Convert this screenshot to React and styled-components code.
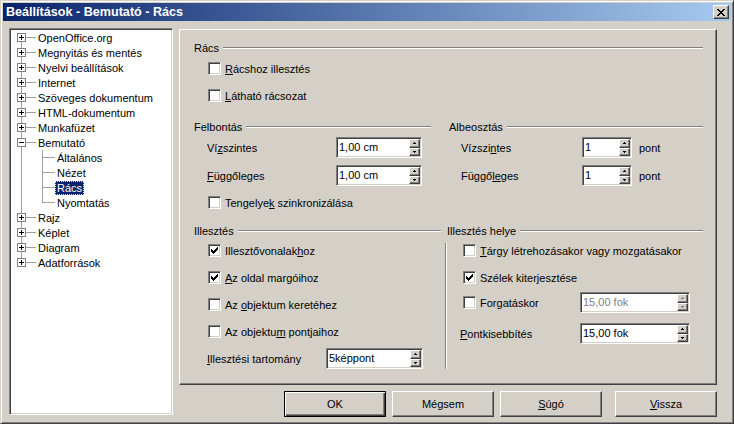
import React from 'react';
import styled, { createGlobalStyle, css } from 'styled-components';

const FACE = '#d4d0c8';
const LINE = '#a0a0a0';

const Global = createGlobalStyle`
  html, body { margin: 0; padding: 0; background: ${FACE}; }
  body { font-family: "Liberation Sans", Arial, sans-serif; font-size: 11px; color: #000; }
  * { box-sizing: border-box; }
`;

const sunken = css`
  border: 1px solid;
  border-color: #808080 #fff #fff #808080;
  box-shadow: inset 1px 1px #404040, inset -1px -1px ${FACE};
`;

const raised = css`
  border: 1px solid;
  border-color: #fff #404040 #404040 #fff;
  box-shadow: inset -1px -1px #808080;
`;

const Window = styled.div`
  width: 734px;
  height: 424px;
  background: ${FACE};
  border: 1px solid;
  border-color: ${FACE} #404040 #404040 ${FACE};
  box-shadow: inset 1px 1px #fff, inset -1px -1px #808080;
  padding: 2px;
  display: flex;
  flex-direction: column;
`;

const TitleBar = styled.div`
  height: 18px;
  flex: none;
  display: flex;
  align-items: center;
  justify-content: space-between;
  padding: 0 2px 0 3px;
  background: linear-gradient(to right, #0a246a, #a6caf0);
`;

const Title = styled.span`
  color: #fff;
  font-weight: bold;
  font-size: 12.6px;
  line-height: 18px;
  white-space: nowrap;
`;

const CloseButton = styled.div`
  width: 16px;
  height: 14px;
  background: ${FACE};
  ${raised};
  display: flex;
  align-items: center;
  justify-content: center;
`;

const Glyph = styled.svg`
  display: block;
  flex: none;
`;

const Body = styled.div`
  flex: 1;
  display: flex;
  gap: 6px;
  padding: 7px 14px 0 6px;
`;

const Tree = styled.div`
  width: 164px;
  height: 387px;
  flex: none;
  background: #fff;
  ${sunken};
  padding: 1px 1px 0 1px;
  display: flex;
  flex-direction: column;
`;

const TreeRow = styled.div`
  height: 15px;
  display: flex;
  align-items: center;
`;

const TreeLabel = styled.span`
  height: 14px;
  line-height: 14px;
  padding: 0 2px;
  white-space: nowrap;
  ${p => p.$selected && css`
    background: #0a246a;
    color: #fff;
    outline: 1px dotted #e8dca0;
    outline-offset: -1px;
  `}
`;

const RightCol = styled.div`
  width: 538px;
  flex: none;
  display: flex;
  flex-direction: column;
  gap: 6px;
  padding-top: 1px;
`;

const Panel = styled.div`
  height: 356px;
  ${raised};
  padding: 11px 13px 0 14px;
  display: flex;
  flex-direction: column;
`;

const GroupHead = styled.div`
  height: 14px;
  display: flex;
  align-items: center;
  gap: 4px;
  padding-left: ${p => p.$pl || 0}px;
`;

const HeadText = styled.span`
  line-height: 14px;
  white-space: nowrap;
`;

const HeadLine = styled.div`
  flex: 1;
  height: 2px;
  border-top: 1px solid #808080;
  border-bottom: 1px solid #fff;
`;

const TwoCol = styled.div`
  display: flex;
  gap: ${p => p.$gap}px;
  margin-top: ${p => p.$mt}px;
`;

const Col = styled.div`
  width: ${p => p.$w}px;
  flex: none;
  display: flex;
  flex-direction: column;
`;

const CheckRow = styled.div`
  height: 13px;
  display: flex;
  align-items: center;
  gap: 4px;
  margin-top: ${p => p.$mt || 0}px;
  margin-left: ${p => p.$ml || 0}px;
  white-space: nowrap;
`;

const Box = styled.div`
  width: 13px;
  height: 13px;
  flex: none;
  background: #fff;
  ${sunken};
  display: flex;
  align-items: center;
  justify-content: center;
`;

const FieldRow = styled.div`
  height: 21px;
  display: flex;
  align-items: center;
  margin-top: ${p => p.$mt || 0}px;
  margin-left: ${p => p.$ml || 0}px;
  white-space: nowrap;
`;

const FieldLabel = styled.span`
  width: ${p => p.$w}px;
  flex: none;
  margin-left: ${p => p.$ml || 0}px;
`;

const Spin = styled.div`
  width: ${p => p.$w}px;
  height: 21px;
  flex: none;
  background: #fff;
  ${sunken};
  padding: 1px;
  display: flex;
`;

const SpinText = styled.span`
  flex: 1;
  line-height: 17px;
  padding-left: 1px;
  color: ${p => (p.$disabled ? '#808080' : '#000')};
`;

const SpinButtons = styled.div`
  width: 11px;
  flex: none;
  display: flex;
  flex-direction: column;
`;

const SpinButton = styled.div`
  flex: 1;
  background: ${FACE};
  ${raised};
  display: flex;
  align-items: center;
  justify-content: center;
`;

const Unit = styled.span`
  margin-left: 7px;
`;

const SideBody = styled.div`
  margin-top: 5px;
  height: 126px;
  border-left: 1px solid #808080;
  box-shadow: inset 1px 0 #fff;
  padding: 1px 0 0 14px;
  display: flex;
  flex-direction: column;
`;

const ButtonRow = styled.div`
  height: 26px;
  display: flex;
  justify-content: flex-end;
  gap: 6px;
`;

const Button = styled.button`
  width: 102px;
  height: 26px;
  margin: 0;
  padding: 0;
  font: 11px "Liberation Sans", Arial, sans-serif;
  color: #000;
  background: ${FACE};
  ${raised};
  margin-left: ${p => p.$ml || 0}px;
  ${p => p.$default && css`
    border-color: #000;
    box-shadow: inset 1px 1px #fff, inset -1px -1px #404040, inset -2px -2px #808080;
  `}
`;

const U = styled.span`
  text-decoration: underline;
`;

function Pixels({ rows, w, h, color = '#000' }) {
  return (
    <Glyph width={w} height={h} shapeRendering="crispEdges">
      {rows.map((r, y) => r.map(x => <rect key={`${x}-${y}`} x={x} y={y} width="1" height="1" fill={color} />))}
    </Glyph>
  );
}

const X_ROWS = [[0, 1, 6, 7], [1, 2, 5, 6], [2, 3, 4, 5], [3, 4], [2, 3, 4, 5], [1, 2, 5, 6], [0, 1, 6, 7]];
const CHECK_ROWS = [[6], [5, 6], [0, 4, 5, 6], [0, 1, 3, 4, 5], [0, 1, 2, 3, 4], [1, 2, 3], [2]];
const UP_ROWS = [[1], [0, 1, 2]];
const DOWN_ROWS = [[0, 1, 2], [1]];

function CheckBox({ checked }) {
  return <Box>{checked && <Pixels rows={CHECK_ROWS} w={7} h={7} />}</Box>;
}

function SpinBox({ w, value, disabled }) {
  const c = disabled ? '#808080' : '#000';
  return (
    <Spin $w={w}>
      <SpinText $disabled={disabled}>{value}</SpinText>
      <SpinButtons>
        <SpinButton><Pixels rows={UP_ROWS} w={3} h={2} color={c} /></SpinButton>
        <SpinButton><Pixels rows={DOWN_ROWS} w={3} h={2} color={c} /></SpinButton>
      </SpinButtons>
    </Spin>
  );
}

function Check({ checked, children, mt, ml }) {
  return (
    <CheckRow $mt={mt} $ml={ml}>
      <CheckBox checked={checked} />
      <span>{children}</span>
    </CheckRow>
  );
}

function Heading({ children, pl }) {
  return (
    <GroupHead $pl={pl}>
      <HeadText>{children}</HeadText>
      <HeadLine />
    </GroupHead>
  );
}

function TopConnector({ first, last, kind }) {
  const y0 = first ? 7 : 0;
  const y1 = last ? 8 : 15;
  return (
    <Glyph width="25" height="15" shapeRendering="crispEdges">
      <rect x="10" y={y0} width="1" height={y1 - y0} fill={LINE} />
      <rect x="10" y="7" width="15" height="1" fill={LINE} />
      <rect x="6.5" y="3.5" width="8" height="8" fill="#fff" stroke="#808080" />
      <rect x="8" y="7" width="5" height="1" fill="#000" />
      {kind === 'plus' && <rect x="10" y="5" width="1" height="5" fill="#000" />}
    </Glyph>
  );
}

function ChildConnector({ last }) {
  return (
    <Glyph width="44" height="15" shapeRendering="crispEdges">
      <rect x="10" y="0" width="1" height="15" fill={LINE} />
      <rect x="31" y="0" width="1" height={last ? 8 : 15} fill={LINE} />
      <rect x="31" y="7" width="13" height="1" fill={LINE} />
    </Glyph>
  );
}

const TREE = [
  { label: 'OpenOffice.org' },
  { label: 'Megnyitás és mentés' },
  { label: 'Nyelvi beállítások' },
  { label: 'Internet' },
  { label: 'Szöveges dokumentum' },
  { label: 'HTML-dokumentum' },
  { label: 'Munkafüzet' },
  { label: 'Bemutató', children: ['Általános', 'Nézet', 'Rács', 'Nyomtatás'], selected: 'Rács' },
  { label: 'Rajz' },
  { label: 'Képlet' },
  { label: 'Diagram' },
  { label: 'Adatforrások' },
];

function OptionsTree() {
  const rows = [];
  TREE.forEach((item, i) => {
    rows.push(
      <TreeRow key={item.label}>
        <TopConnector first={i === 0} last={i === TREE.length - 1} kind={item.children ? 'minus' : 'plus'} />
        <TreeLabel>{item.label}</TreeLabel>
      </TreeRow>
    );
    if (item.children) {
      item.children.forEach((c, j) => {
        rows.push(
          <TreeRow key={c}>
            <ChildConnector last={j === item.children.length - 1} />
            <TreeLabel $selected={c === item.selected}>{c}</TreeLabel>
          </TreeRow>
        );
      });
    }
  });
  return <Tree>{rows}</Tree>;
}

export default function App() {
  return (
    <>
      <Global />
      <Window>
        <TitleBar>
          <Title>Beállítások - Bemutató - Rács</Title>
          <CloseButton><Pixels rows={X_ROWS} w={8} h={7} /></CloseButton>
        </TitleBar>
        <Body>
          <OptionsTree />
          <RightCol>
            <Panel>
              <Heading>Rács</Heading>
              <Check mt={7} ml={14}><U>R</U>ácshoz illesztés</Check>
              <Check mt={14} ml={14}><U>L</U>átható rácsozat</Check>

              <TwoCol $mt={18} $gap={18}>
                <Col $w={237}>
                  <Heading>Felbontás</Heading>
                  <FieldRow $mt={3} $ml={13}>
                    <FieldLabel $w={129}>Ví<U>z</U>szintes</FieldLabel>
                    <SpinBox w={86} value="1,00 cm" />
                  </FieldRow>
                  <FieldRow $mt={7} $ml={13}>
                    <FieldLabel $w={129}><U>F</U>üggőleges</FieldLabel>
                    <SpinBox w={86} value="1,00 cm" />
                  </FieldRow>
                  <Check mt={10} ml={14}>Tengelye<U>k</U> szinkronizálása</Check>
                </Col>
                <Col $w={254}>
                  <Heading>Albeosztás</Heading>
                  <FieldRow $mt={3} $ml={12}>
                    <FieldLabel $w={121}>Vízszi<U>n</U>tes</FieldLabel>
                    <SpinBox w={50} value="1" />
                    <Unit>pont</Unit>
                  </FieldRow>
                  <FieldRow $mt={7} $ml={12}>
                    <FieldLabel $w={121}>Függő<U>le</U>ges</FieldLabel>
                    <SpinBox w={50} value="1" />
                    <Unit>pont</Unit>
                  </FieldRow>
                </Col>
              </TwoCol>

              <TwoCol $mt={15} $gap={4}>
                <Col $w={247}>
                  <Heading>Illesztés</Heading>
                  <Check checked mt={6} ml={14}>Illesztővonalak<U>h</U>oz</Check>
                  <Check checked mt={14} ml={14}><U>A</U>z oldal margóihoz</Check>
                  <Check mt={14} ml={14}>Az <U>o</U>bjektum keretéhez</Check>
                  <Check mt={14} ml={14}>Az objektu<U>m</U> pontjaihoz</Check>
                  <FieldRow $mt={10} $ml={13}>
                    <FieldLabel $w={119}><U>I</U>llesztési tartomány</FieldLabel>
                    <SpinBox w={97} value="5képpont" />
                  </FieldRow>
                </Col>
                <Col $w={258}>
                  <Heading pl={2}>Illesztés helye</Heading>
                  <SideBody>
                    <Check ml={3}><U>T</U>árgy létrehozásakor vagy mozgatásakor</Check>
                    <Check checked mt={14} ml={3}>Szélek kiter<U>j</U>esztése</Check>
                    <FieldRow $mt={8} $ml={3}>
                      <CheckBox />
                      <FieldLabel $w={100} $ml={4}>For<U>g</U>atáskor</FieldLabel>
                      <SpinBox w={110} value="15,00 fok" disabled />
                    </FieldRow>
                    <FieldRow $mt={10}>
                      <FieldLabel $w={120}><U>P</U>ontkisebbítés</FieldLabel>
                      <SpinBox w={110} value="15,00 fok" />
                    </FieldRow>
                  </SideBody>
                </Col>
              </TwoCol>
            </Panel>
            <ButtonRow>
              <Button $default>OK</Button>
              <Button>Mégsem</Button>
              <Button><U>S</U>úgó</Button>
              <Button $ml={7}><U>V</U>issza</Button>
            </ButtonRow>
          </RightCol>
        </Body>
      </Window>
    </>
  );
}
